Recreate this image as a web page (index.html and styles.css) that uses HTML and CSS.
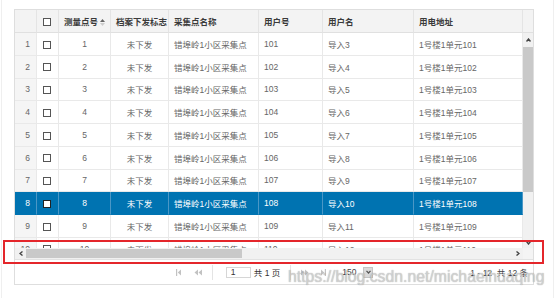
FILE: index.html
```html
<!DOCTYPE html>
<html lang="zh-CN">
	<head>
		<meta charset="UTF-8" />
		<meta name="viewport" content="width=device-width, initial-scale=1.0" />
		<title>采集点列表</title>
		<link rel="stylesheet" href="styles.css">
	</head>
	<body>
		<div class="page">
			<div class="grid">
				<table class="grid-head">
					<colgroup>
						<col class="c-rn" /><col class="c-cb" /><col class="c-no" /><col class="c-flag" />
						<col class="c-name" /><col class="c-uid" /><col class="c-user" /><col class="c-addr" /><col class="c-bar" />
					</colgroup>
					<tr>
						<th></th>
						<th class="center"><span class="box"></span></th>
						<th class="center">测量点号<span class="sort">
							<svg width="5" height="7" viewBox="0 0 5 7"><path d="M2.5 0 L5 3 L0 3Z" fill="#666" /><path d="M0 4 L5 4 L2.5 7Z" fill="#ccc" /></svg>
						</span></th>
						<th class="center">档案下发标志</th>
						<th>采集点名称</th>
						<th>用户号</th>
						<th>用户名</th>
						<th>用电地址</th>
						<th></th>
					</tr>
				</table>

				<div class="grid-body">
					<div class="rows">
						<table class="grid-rows">
							<colgroup>
								<col class="c-rn" /><col class="c-cb" /><col class="c-no" /><col class="c-flag" />
								<col class="c-name" /><col class="c-uid" /><col class="c-user" /><col class="c-addr" />
							</colgroup>
							<tr><td class="rn">1</td><td class="center"><span class="box"></span></td><td class="center">1</td><td class="center">未下发</td><td>错埠岭1小区采集点</td><td>101</td><td>导入3</td><td>1号楼1单元101</td></tr>
							<tr><td class="rn">2</td><td class="center"><span class="box"></span></td><td class="center">2</td><td class="center">未下发</td><td>错埠岭1小区采集点</td><td>102</td><td>导入4</td><td>1号楼1单元102</td></tr>
							<tr><td class="rn">3</td><td class="center"><span class="box"></span></td><td class="center">3</td><td class="center">未下发</td><td>错埠岭1小区采集点</td><td>103</td><td>导入5</td><td>1号楼1单元103</td></tr>
							<tr><td class="rn">4</td><td class="center"><span class="box"></span></td><td class="center">4</td><td class="center">未下发</td><td>错埠岭1小区采集点</td><td>104</td><td>导入6</td><td>1号楼1单元104</td></tr>
							<tr><td class="rn">5</td><td class="center"><span class="box"></span></td><td class="center">5</td><td class="center">未下发</td><td>错埠岭1小区采集点</td><td>105</td><td>导入7</td><td>1号楼1单元105</td></tr>
							<tr><td class="rn">6</td><td class="center"><span class="box"></span></td><td class="center">6</td><td class="center">未下发</td><td>错埠岭1小区采集点</td><td>106</td><td>导入8</td><td>1号楼1单元106</td></tr>
							<tr><td class="rn">7</td><td class="center"><span class="box"></span></td><td class="center">7</td><td class="center">未下发</td><td>错埠岭1小区采集点</td><td>107</td><td>导入9</td><td>1号楼1单元107</td></tr>
							<tr class="selected"><td class="rn">8</td><td class="center"><span class="box"></span></td><td class="center">8</td><td class="center">未下发</td><td>错埠岭1小区采集点</td><td>108</td><td>导入10</td><td>1号楼1单元108</td></tr>
							<tr><td class="rn">9</td><td class="center"><span class="box"></span></td><td class="center">9</td><td class="center">未下发</td><td>错埠岭1小区采集点</td><td>109</td><td>导入11</td><td>1号楼1单元109</td></tr>
							<tr><td class="rn">10</td><td class="center"><span class="box"></span></td><td class="center">10</td><td class="center">未下发</td><td>错埠岭1小区采集点</td><td>110</td><td>导入12</td><td>1号楼1单元110</td></tr>
						</table>
					</div>

					<div class="vscroll">
						<span class="arrow up">
							<svg width="5" height="4" viewBox="0 0 5 4"><path d="M0.5 3.5 L2.5 1 L4.5 3.5" fill="none" stroke="#444" stroke-width="1.4" /></svg>
						</span>
						<span class="thumb"></span>
						<span class="track"></span>
						<span class="arrow down">
							<svg width="5" height="4" viewBox="0 0 5 4"><path d="M0.5 0.5 L2.5 3 L4.5 0.5" fill="none" stroke="#444" stroke-width="1.4" /></svg>
						</span>
					</div>

					<div class="hscroll">
						<span class="arrow">
							<svg width="4" height="5" viewBox="0 0 4 5"><path d="M3.5 0.5 L1 2.5 L3.5 4.5" fill="none" stroke="#444" stroke-width="1.4" /></svg>
						</span>
						<span class="thumb"></span>
						<span class="track"></span>
						<span class="arrow">
							<svg width="4" height="5" viewBox="0 0 4 5"><path d="M0.5 0.5 L3 2.5 L0.5 4.5" fill="none" stroke="#444" stroke-width="1.4" /></svg>
						</span>
					</div>
					<div class="corner"></div>
				</div>

				<div class="pager">
					<div></div>
					<div class="pager-nav">
						<a href="javascript:;" class="pg-first">
							<svg width="5" height="7" viewBox="0 0 5 7"><rect x="0" y="0" width="1.2" height="7" /><path d="M5 0.5 L1.8 3.5 L5 6.5Z" /></svg>
						</a>
						<a href="javascript:;" class="pg-prev">
							<svg width="8" height="7" viewBox="0 0 8 7"><path d="M4 0.5 L0.5 3.5 L4 6.5Z M8 0.5 L4.5 3.5 L8 6.5Z" /></svg>
						</a>
						<span class="pg-sep"></span>
						<input class="pg-input" type="text" value="1" />
						<span class="pg-total">共 1 页</span>
						<span class="pg-sep"></span>
						<a href="javascript:;" class="pg-next">
							<svg width="8" height="7" viewBox="0 0 8 7"><path d="M0 0.5 L3.5 3.5 L0 6.5Z M4 0.5 L7.5 3.5 L4 6.5Z" /></svg>
						</a>
						<a href="javascript:;" class="pg-last">
							<svg width="5" height="7" viewBox="0 0 5 7"><path d="M0 0.5 L3.2 3.5 L0 6.5Z" /><rect x="3.8" y="0" width="1.2" height="7" /></svg>
						</a>
						<span class="pg-size">
							<span class="pg-size-val">150</span>
							<span class="pg-size-btn">
								<svg width="5" height="4" viewBox="0 0 5 4"><path d="M0.5 0.8 L2.5 3 L4.5 0.8" fill="none" stroke="#555" stroke-width="1.2" /></svg>
							</span>
						</span>
					</div>
					<div class="pager-info">1 - 12&nbsp;&nbsp;共 12 条</div>
				</div>
			</div>

			<div class="mark-box"></div>
			<div class="watermark">https://blog.csdn.net/michaelhuaqing</div>
		</div>
	</body>
</html>
```

FILE: styles.css
```css
* {
	margin: 0;
	padding: 0;
	box-sizing: border-box;
}

body {
	font-family: "Liberation Sans", "Noto Sans CJK SC", sans-serif;
	font-size: 8.5px;
	color: #666;
	background-color: #fff;
}

.page {
	position: relative;
	margin-left: 1px;
	width: 553px;
	height: 298px;
	padding: 9px 0 0 12px;
	border-left: 1px solid #efefef;
	border-right: 1px solid #efefef;
}

.grid {
	width: 520px;
	border: 1px solid #dedede;
}

table {
	table-layout: fixed;
	border-collapse: separate;
	border-spacing: 0;
}

.grid-head {
	width: 518px;
}

.grid-rows {
	width: 508px;
}

.c-rn { width: 22px; }
.c-cb { width: 22px; }
.c-no { width: 52px; }
.c-flag { width: 58px; }
.c-name { width: 90px; }
.c-uid { width: 64px; }
.c-user { width: 91px; }
.c-addr { width: 109px; }
.c-bar { width: 10px; }

th,
td {
	padding: 0 5px;
	text-align: left;
	white-space: nowrap;
	overflow: hidden;
	vertical-align: middle;
}

th {
	height: 23px;
	background-color: #f3f3f3;
	border-right: 1px solid #e4e4e4;
	border-bottom: 1px solid #e0e0e0;
	color: #3a3a3a;
	font-weight: bold;
}

th:last-child {
	border-right: 0;
}

td {
	height: 22.75px;
	border-right: 1px solid #e9e9e9;
	border-bottom: 1px solid #e9e9e9;
}

.center {
	text-align: center;
}

td.rn {
	text-align: right;
	padding-right: 6px;
	background-color: #f5f5f5;
}

.box {
	display: inline-block;
	width: 8px;
	height: 8px;
	border: 1px solid #555;
	background-color: #fff;
	vertical-align: middle;
	margin-right: 2px;
}

.sort {
	display: inline-block;
	margin-left: 2px;
	vertical-align: middle;
	line-height: 0;
}

.selected td,
.selected td.rn {
	background-color: #0073b1;
	color: #fff;
	border-right-color: #4a97c6;
	border-bottom-color: #0073b1;
}

.selected .box {
	border-color: #222;
}

/* body with fake scrollbars */
.grid-body {
	display: grid;
	grid-template-columns: 508px 10px;
	grid-template-rows: 215px 11px;
}

.rows {
	overflow: hidden;
}

.vscroll {
	display: flex;
	flex-direction: column;
	background-color: #f1f1f1;
}

.vscroll .arrow {
	display: flex;
	align-items: center;
	justify-content: center;
}

.vscroll .up {
	height: 14px;
}

.vscroll .down {
	height: 11px;
}

.vscroll .thumb {
	height: 145px;
	background-color: #c9c9c9;
}

.vscroll .track {
	flex: 1;
}

.hscroll {
	display: flex;
	background-color: #f1f1f1;
}

.hscroll .arrow {
	width: 11px;
	display: flex;
	align-items: center;
	justify-content: center;
}

.hscroll .thumb {
	width: 216px;
	margin: 1px 0;
	background-color: #c9c9c9;
}

.hscroll .track {
	flex: 1;
}

.corner {
	background-color: #f4f4f4;
}

/* pager */
.pager {
	display: grid;
	grid-template-columns: 1fr auto 1fr;
	align-items: center;
	height: 25px;
	border-top: 1px solid #e2e2e2;
}

.pager-nav {
	display: flex;
	align-items: center;
	padding-left: 1px;
}

.pager-nav a {
	display: flex;
	fill: #c2c2c2;
}

.pg-prev {
	margin-left: 13px;
}

.pg-sep {
	width: 1px;
	height: 15px;
	margin-left: 10px;
	background-color: #e4e4e4;
}

.pg-input {
	margin-left: 13px;
	width: 25px;
	height: 11px;
	border: 1px solid #d6d6d6;
	padding-left: 4px;
	font: inherit;
	color: #333;
	outline: none;
}

.pg-total {
	margin-left: 3px;
	color: #333;
}

.pg-next {
	margin-left: 10px;
}

.pg-last {
	margin-left: 12px;
}

.pg-size {
	display: flex;
	align-items: center;
	margin-left: 16px;
	color: #444;
}

.pg-size-val {
	width: 21px;
}

.pg-size-btn {
	display: flex;
	align-items: center;
	justify-content: center;
	width: 10px;
	height: 11px;
	background-color: #dadada;
	border: 1px solid #c4c4c4;
}

.pager-info {
	justify-self: end;
	padding-right: 5px;
	color: #444;
}

/* annotation on the screenshot */
.mark-box {
	position: absolute;
	left: 1px;
	top: 240px;
	width: 541px;
	height: 24px;
	border: 2px solid #e4262b;
}

.watermark {
	position: absolute;
	left: 286px;
	top: 269px;
	font-size: 15.8px;
	line-height: 1;
	color: rgba(225, 225, 225, 0.7);
	text-shadow: 0 0 1px rgba(0, 0, 0, 0.4);
	white-space: nowrap;
	pointer-events: none;
}
```
